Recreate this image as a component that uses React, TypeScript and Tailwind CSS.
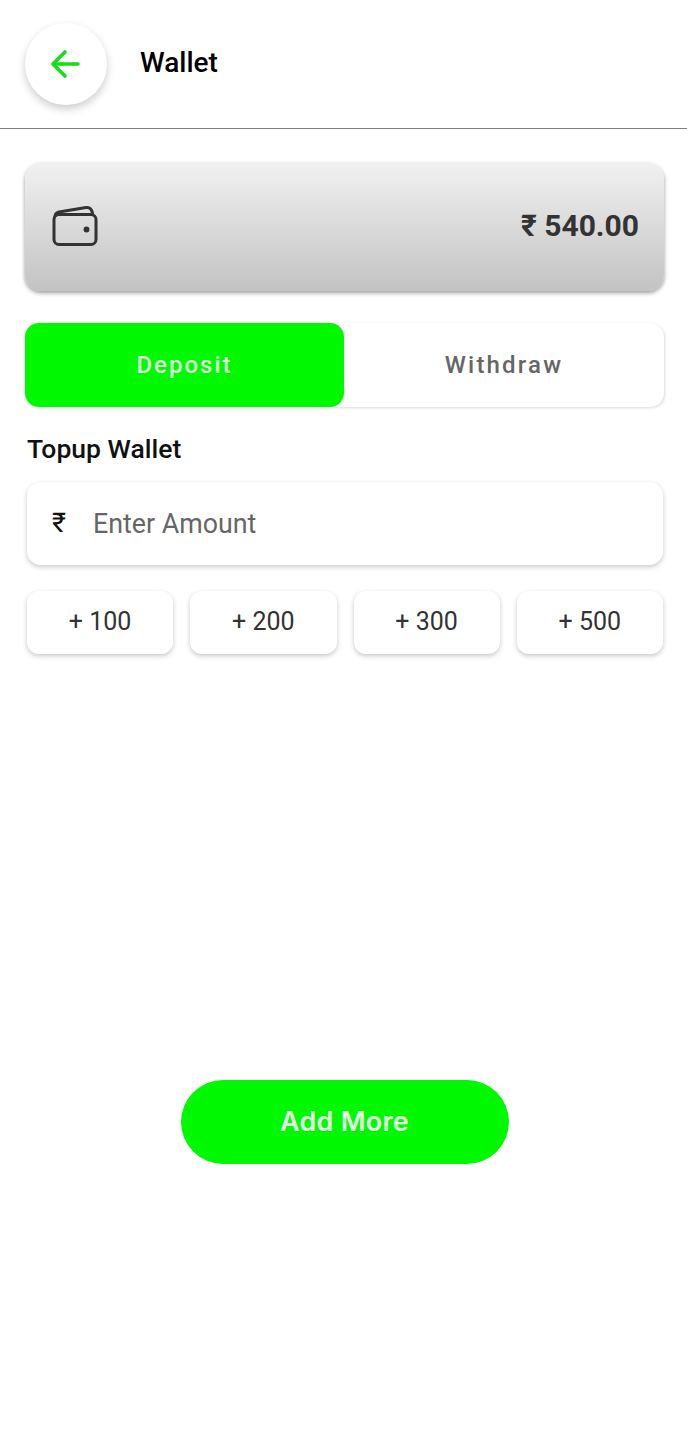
const font = { fontFamily: "Roboto, 'Noto Sans', sans-serif" };

function Amount({ label }: { label: string }) {
  return (
    <div className="flex h-[63px] flex-1 items-center justify-center rounded-[12px] bg-white pb-[2px] text-[25px] text-[#333] shadow-[0_2px_5px_rgba(0,0,0,0.22)]">
      {label}
    </div>
  );
}

export default function App() {
  return (
    <div style={font} className="flex h-[1440px] w-[687px] flex-col bg-white font-['Roboto',sans-serif]">
      <header className="flex h-[129px] items-start border-b border-[#7d7d7d] pl-[25px] pt-[23px]">
        <div className="flex h-[82px] w-[82px] items-center justify-center rounded-full bg-white shadow-[0_4px_8px_rgba(0,0,0,0.2)]">
          <svg width="32" height="32" viewBox="0 0 32 32" fill="none" stroke="#12e012" strokeWidth="3.6" strokeLinecap="round" strokeLinejoin="round">
            <path d="M28 16H3.5" />
            <path d="M15 4L3 16L15 28" />
          </svg>
        </div>
        <h1 className="ml-[33px] mt-[22px] text-[28px] leading-[36px] font-medium text-black">Wallet</h1>
      </header>

      <main className="flex flex-1 flex-col pl-[25px] pr-[23px]">
        <section className="mt-[34px] flex h-[128px] items-center justify-between rounded-[16px] bg-gradient-to-b from-[#f1f1f1] to-[#c3c3c3] pb-[2px] pl-[27px] pr-[25px] shadow-[0_2px_4px_rgba(0,0,0,0.4)]">
          <svg width="46" height="42" viewBox="0 0 46 42" fill="none" stroke="#333" strokeWidth="3" strokeLinejoin="round" strokeLinecap="round">
            <rect x="2" y="9.5" width="42" height="30" rx="5" />
            <path d="M3 11C3.5 8.5 5 7.5 7 7L34 2.5C37 2 39.5 3.5 40.5 8" />
            <circle cx="34.5" cy="24.5" r="2.2" fill="#333" strokeWidth="1.5" />
          </svg>
          <span className="text-[30px] leading-none font-bold text-[#333]">₹ 540.00</span>
        </section>

        <div className="mt-[32px] flex h-[84px] rounded-[14px] bg-white shadow-[1px_1px_3px_rgba(0,0,0,0.14)]">
          <div className="flex w-[319px] items-center justify-center rounded-[14px] bg-[#00f900] text-[24px] font-medium tracking-[2px] text-[#dff8df]">
            Deposit
          </div>
          <div className="flex flex-1 items-center justify-center text-[24px] font-medium tracking-[2.2px] text-[#666]">
            Withdraw
          </div>
        </div>

        <div className="pl-[2px] pr-px">
          <h2 className="mt-[25px] text-[26.5px] leading-[34px] font-medium text-[#111]">Topup Wallet</h2>

          <div className="mt-[16px] flex h-[83px] items-center rounded-[14px] bg-white pl-[25px] shadow-[0_2px_5px_rgba(0,0,0,0.22)]">
            <span className="w-[41px] text-[27px] text-[#111]">₹</span>
            <span className="pt-[2px] text-[26.8px] text-[#666]">Enter Amount</span>
          </div>

          <div className="mt-[26px] flex gap-[17px]">
            <Amount label="+ 100" />
            <Amount label="+ 200" />
            <Amount label="+ 300" />
            <Amount label="+ 500" />
          </div>
        </div>

        <button className="mx-auto mt-[426px] flex h-[84px] w-[328px] items-center justify-center rounded-full bg-[#00f900] font-['Inter',sans-serif] text-[27px] font-semibold tracking-[0.2px] text-[#e4fbe4]">
          Add More
        </button>
      </main>
    </div>
  );
}
